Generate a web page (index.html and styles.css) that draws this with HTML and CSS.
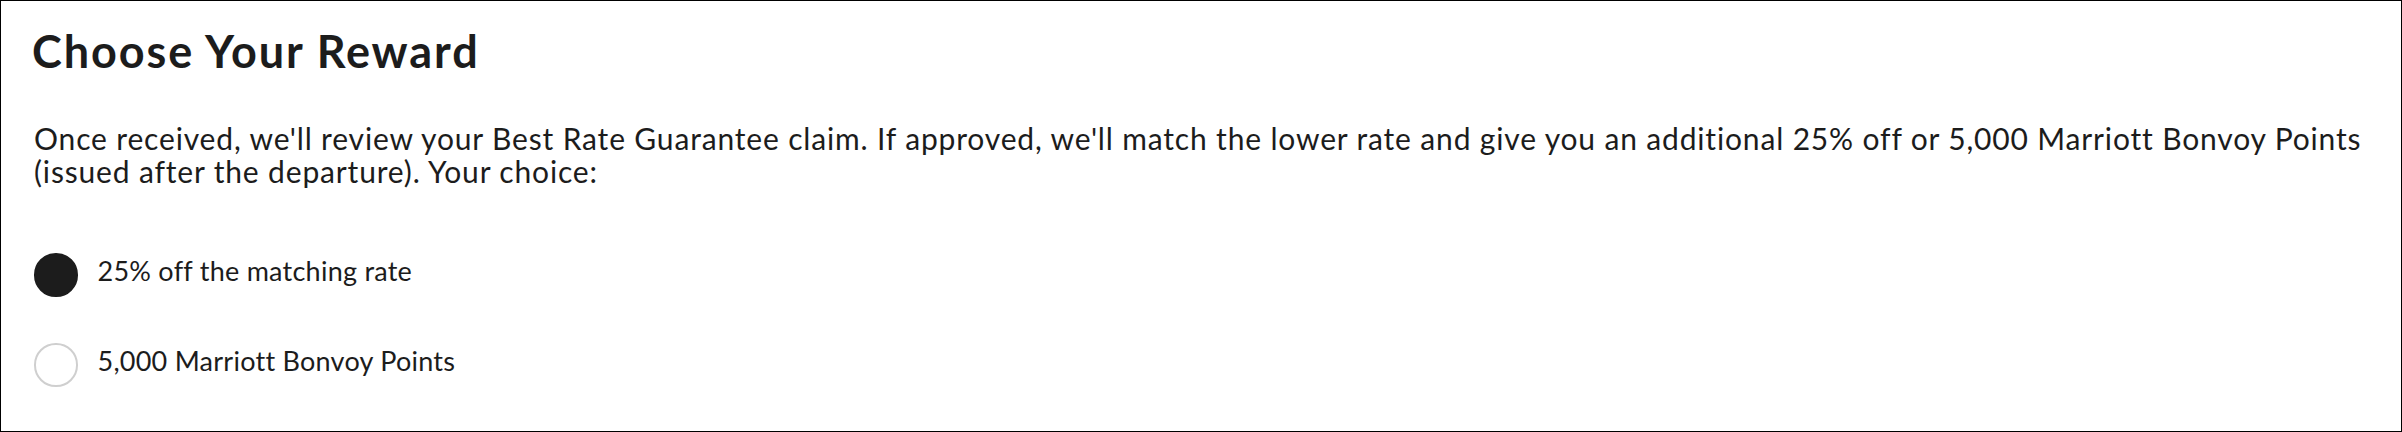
FILE: index.html
```html
<!DOCTYPE html>
<html lang="en">
<head>
<meta charset="utf-8">
<title>Choose Your Reward</title>
<link rel="stylesheet" href="styles.css">
</head>
<body>
<section class="reward">
  <h2 class="reward-title">Choose Your Reward</h2>
  <p class="reward-text">Once received, we'll review your Best Rate Guarantee claim. If approved, we'll match the lower rate and give you an additional 25% off or 5,000 Marriott Bonvoy Points (issued after the departure). Your choice:</p>
  <div class="options">
    <label class="option">
      <span class="radio radio-checked"></span>
      <span class="option-label">25% off the matching rate</span>
    </label>
    <label class="option">
      <span class="radio"></span>
      <span class="option-label">5,000 Marriott Bonvoy Points</span>
    </label>
  </div>
</section>
</body>
</html>
```

FILE: styles.css
```css
html, body {
  margin: 0;
  padding: 0;
  background: #fff;
}

body {
  font-family: Lato, "Liberation Sans", sans-serif;
  color: #1c1c1c;
}

.reward {
  box-sizing: border-box;
  width: 2402px;
  height: 432px;
  border: 1.5px solid #000;
  padding: 23px 4px 0 33px;
}

.reward-title {
  margin: 0 0 0 -2px;
  font-size: 45px;
  line-height: 54px;
  font-weight: 700;
  letter-spacing: 1.9px;
}

.reward-text {
  margin: 44px 0 0 0;
  font-size: 30px;
  line-height: 33px;
  font-weight: 400;
  letter-spacing: 0.84px;
}

.options {
  display: flex;
  flex-direction: column;
  gap: 46.5px;
  margin-top: 65px;
}

.option {
  display: flex;
  align-items: center;
  gap: 20px;
  height: 43.5px;
}

.radio {
  box-sizing: border-box;
  flex: 0 0 43.5px;
  width: 43.5px;
  height: 43.5px;
  border-radius: 50%;
  border: 2px solid #cfcfcf;
  background: #fff;
}

.radio-checked {
  border-color: #1c1c1c;
  background: #1c1c1c;
}

.option-label {
  font-size: 27px;
  line-height: 30px;
  padding-bottom: 8px;
  letter-spacing: 0.25px;
}
```
